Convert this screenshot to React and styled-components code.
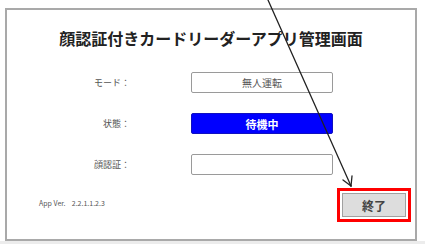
import React from "react";
import styled, { createGlobalStyle } from "styled-components";

const GlobalStyle = createGlobalStyle`
  html, body {
    margin: 0;
    padding: 0;
    background: #ffffff;
  }
  body {
    font-family: "Noto Sans CJK JP", "Noto Sans", sans-serif;
    width: 425px;
    height: 244px;
    overflow: hidden;
  }
`;

const Page = styled.div`
  position: relative;
  width: 425px;
  height: 244px;
  padding: 8px 0 0 5px;
  box-sizing: border-box;
  background: linear-gradient(#ffffff 241px, #ececec 241px);
`;

const Panel = styled.div`
  width: 412px;
  height: 233px;
  box-sizing: border-box;
  border: 2px solid #a9a9a9;
  background: #fff;
  padding-top: 18px;
  display: flex;
  flex-direction: column;
`;

const Title = styled.h1`
  margin: 0;
  font-size: 16px;
  line-height: 20px;
  font-weight: 700;
  color: #222;
  text-align: center;
  letter-spacing: 0;
`;

const Form = styled.div`
  margin-top: 24px;
  display: grid;
  grid-template-columns: 123px 142px;
  column-gap: 61px;
  row-gap: 20px;
  align-items: center;
`;

const Label = styled.div`
  text-align: right;
  font-size: 9px;
  color: #555;
`;

const Field = styled.div`
  height: 21px;
  box-sizing: border-box;
  border: ${(p) => (p.$active ? "1px solid #1010c0" : "1.5px solid #9a9a9a")};
  border-radius: 2px;
  background: ${(p) => (p.$active ? "#0000ff" : "#fff")};
  color: ${(p) => (p.$active ? "#fff" : "#555")};
  font-size: ${(p) => (p.$active ? "11px" : "10px")};
  font-weight: ${(p) => (p.$active ? 700 : 400)};
  display: flex;
  align-items: center;
  justify-content: center;
`;

const Footer = styled.div`
  margin-top: 13px;
  padding: 0 4px 0 32px;
  display: flex;
  justify-content: space-between;
  align-items: center;
`;

const Version = styled.div`
  font-size: 7px;
  color: #555;
  white-space: pre;
  margin-top: -4px;
`;

const Highlight = styled.div`
  border: 3px solid #ff0000;
  padding: 2px;
`;

const EndButton = styled.button`
  width: 64px;
  height: 24px;
  box-sizing: border-box;
  border: 1px solid #a0a0a0;
  background: #dddddd;
  color: #444;
  font-family: inherit;
  font-size: 12px;
  font-weight: 700;
  padding: 0;
  display: flex;
  align-items: center;
  justify-content: center;
`;

const Overlay = styled.svg`
  position: absolute;
  left: 0;
  top: 0;
  pointer-events: none;
`;

export default function App() {
  return (
    <>
      <GlobalStyle />
      <Page>
        <Panel>
          <Title>顔認証付きカードリーダーアプリ管理画面</Title>
          <Form>
            <Label>モード：</Label>
            <Field>無人運転</Field>
            <Label>状態：</Label>
            <Field $active>待機中</Field>
            <Label>顔認証：</Label>
            <Field />
          </Form>
          <Footer>
            <Version>{"App Ver.    2.2.1.1.2.3"}</Version>
            <Highlight>
              <EndButton>終了</EndButton>
            </Highlight>
          </Footer>
        </Panel>
        <Overlay width="425" height="244">
          <g stroke="#222" strokeWidth="1.3" fill="none" strokeLinecap="round">
            <line x1="268" y1="0" x2="351" y2="186" />
            <line x1="351" y1="186" x2="352" y2="176" />
            <line x1="351" y1="186" x2="343" y2="180" />
          </g>
        </Overlay>
      </Page>
    </>
  );
}
